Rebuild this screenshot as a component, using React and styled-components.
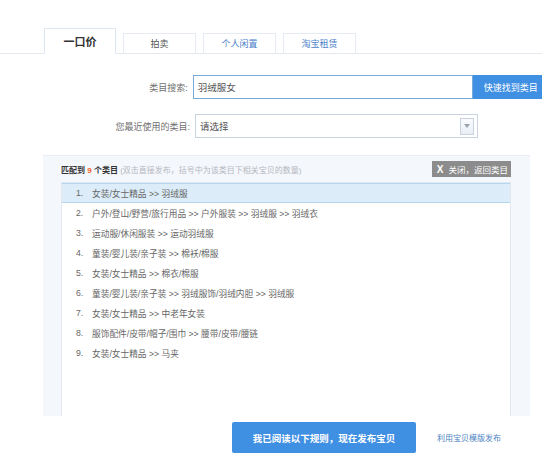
import React from 'react';
import styled, { createGlobalStyle } from 'styled-components';

const GlobalStyle = createGlobalStyle`
  html, body {
    margin: 0;
    padding: 0;
    background: #fff;
    font-family: "Liberation Sans", "Noto Sans CJK SC", sans-serif;
    font-size: 12px;
    color: #555;
    overflow: hidden;
  }
`;

const Page = styled.div`
  width: 542px;
  height: 458px;
  padding-top: 27px;
  box-sizing: border-box;
`;

const TabBar = styled.div`
  display: flex;
  align-items: flex-end;
  gap: 7px;
  padding-left: 44px;
  height: 26px;
  border-bottom: 1px solid #e4e9f0;
`;

const Tab = styled.div`
  width: ${p => (p.$active ? '72px' : '73px')};
  height: ${p => (p.$active ? '26px' : '21px')};
  margin-bottom: -1px;
  box-sizing: border-box;
  display: flex;
  align-items: center;
  justify-content: center;
  border: 1px solid ${p => (p.$active ? '#dfe5ee' : '#e6ebf3')};
  border-bottom: ${p => (p.$active ? '1px solid #fff' : '1px solid #e4e9f0')};
  background: #fff;
  font-size: ${p => (p.$active ? '11px' : '9px')};
  font-weight: ${p => (p.$active ? 'bold' : 'normal')};
  color: ${p => p.$color};
`;

const Form = styled.div`
  display: flex;
  flex-direction: column;
  gap: 15px;
  margin-top: 21px;
`;

const Row = styled.div`
  display: flex;
  align-items: center;
`;

const Label = styled.div`
  width: 190px;
  text-align: right;
  font-size: 9px;
  color: #6f6f6f;
  padding-right: 5px;
`;

const Input = styled.div`
  width: 283px;
  height: 24px;
  box-sizing: border-box;
  border: 1px solid ${p => (p.$focus ? '#79a9d8' : '#c9d3df')};
  display: flex;
  align-items: center;
  justify-content: space-between;
  padding-left: 4px;
  padding-right: 2px;
  font-size: 9.5px;
  color: #555;
`;

const SearchButton = styled.div`
  width: 70px;
  height: 24px;
  background: #3f8fe3;
  color: #fff;
  font-size: 9px;
  display: flex;
  align-items: center;
  padding-left: 11px;
  box-sizing: border-box;
`;

const Arrow = styled.div`
  width: 14px;
  height: 17px;
  box-sizing: border-box;
  border: 1px solid #c9d3df;
  background: linear-gradient(#fafcfe, #e9eef4);
  display: flex;
  align-items: center;
  justify-content: center;
  margin-right: 1px;
`;

const Panel = styled.div`
  margin: 17px 0 0 43px;
  width: 487px;
  height: 261px;
  box-sizing: border-box;
  background: #f4f7fc;
  border-top: 1px solid #e8edf5;
  padding: 4px 19px 0 18px;
  display: flex;
  flex-direction: column;
`;

const PanelHead = styled.div`
  display: flex;
  align-items: center;
  justify-content: space-between;
  height: 18px;
  margin-bottom: 4px;
`;

const Matched = styled.div`
  font-size: 8px;
  color: #333;
  font-weight: bold;
  span {
    color: #f45b2a;
  }
  em {
    font-style: normal;
    font-weight: normal;
    color: #b4b8bf;
  }
`;

const CloseButton = styled.div`
  background: #8c8c8c;
  color: #fff;
  font-size: 8.5px;
  height: 16px;
  padding: 0 3px 0 5px;
  display: flex;
  align-items: center;
  gap: 5px;
  b {
    font-size: 10px;
  }
`;

const List = styled.div`
  flex: 1;
  background: #fff;
  border: 1px solid #e3e8ef;
  border-bottom: none;
`;

const Item = styled.div`
  height: 20px;
  box-sizing: border-box;
  display: flex;
  align-items: center;
  padding-left: 14px;
  font-size: 8.7px;
  color: #666;
  background: ${p => (p.$selected ? '#dcedf9' : 'transparent')};
  border-top: 1px solid ${p => (p.$selected ? '#b3d6ee' : 'transparent')};
  border-bottom: 1px solid ${p => (p.$selected ? '#b3d6ee' : 'transparent')};
  span {
    width: 16px;
  }
`;

const Footer = styled.div`
  display: flex;
  align-items: center;
  padding-left: 232px;
  margin-top: 6px;
  gap: 21px;
`;

const PublishButton = styled.div`
  width: 184px;
  height: 31px;
  background: #3f8fe3;
  color: #fff;
  font-size: 9.5px;
  font-weight: bold;
  display: flex;
  align-items: center;
  justify-content: center;
  border-radius: 2px;
`;

const TemplateLink = styled.div`
  font-size: 8px;
  color: #4d82c2;
`;

const items = [
  '女装/女士精品 >> 羽绒服',
  '户外/登山/野营/旅行用品 >> 户外服装 >> 羽绒服 >> 羽绒衣',
  '运动服/休闲服装 >> 运动羽绒服',
  '童装/婴儿装/亲子装 >> 棉袄/棉服',
  '女装/女士精品 >> 棉衣/棉服',
  '童装/婴儿装/亲子装 >> 羽绒服饰/羽绒内胆 >> 羽绒服',
  '女装/女士精品 >> 中老年女装',
  '服饰配件/皮带/帽子/围巾 >> 腰带/皮带/腰链',
  '女装/女士精品 >> 马夹',
];

export default function App() {
  return (
    <Page>
      <GlobalStyle />
      <TabBar>
        <Tab $active $color="#333">一口价</Tab>
        <Tab $color="#555">拍卖</Tab>
        <Tab $color="#4a7fc8">个人闲置</Tab>
        <Tab $color="#4a7fc8">淘宝租赁</Tab>
      </TabBar>
      <Form>
        <Row>
          <Label>类目搜索:</Label>
          <Input $focus>羽绒服女</Input>
          <SearchButton>快速找到类目</SearchButton>
        </Row>
        <Row>
          <Label>您最近使用的类目:</Label>
          <Input>
            请选择
            <Arrow>
              <svg width="6" height="4" viewBox="0 0 6 4">
                <path d="M0 0 L6 0 L3 4 Z" fill="#9aa3ad" />
              </svg>
            </Arrow>
          </Input>
        </Row>
      </Form>
      <Panel>
        <PanelHead>
          <Matched>
            匹配到 <span>9</span> 个类目 <em>(双击直接发布，括号中为该类目下相关宝贝的数量)</em>
          </Matched>
          <CloseButton>
            <b>X</b>关闭，返回类目
          </CloseButton>
        </PanelHead>
        <List>
          {items.map((t, i) => (
            <Item key={i} $selected={i === 0}>
              <span>{i + 1}.</span>
              {t}
            </Item>
          ))}
        </List>
      </Panel>
      <Footer>
        <PublishButton>我已阅读以下规则，现在发布宝贝</PublishButton>
        <TemplateLink>利用宝贝模版发布</TemplateLink>
      </Footer>
    </Page>
  );
}
